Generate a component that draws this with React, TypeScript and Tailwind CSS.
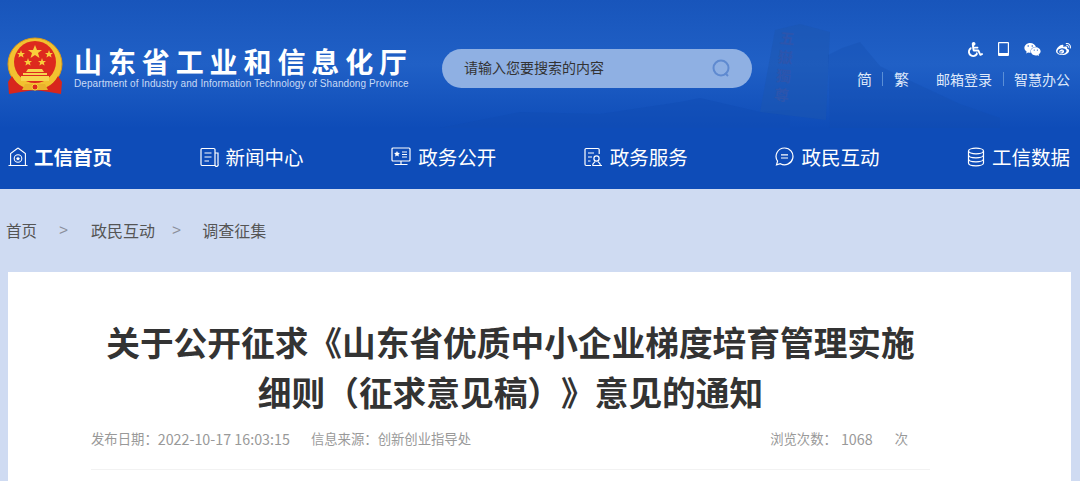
import { FaWeibo, FaWeixin, FaWheelchair } from 'react-icons/fa';

const cjk = "font-['Microsoft_YaHei','Noto_Sans_CJK_SC',sans-serif]";

const Emblem = () => (
  <svg width="64" height="60" viewBox="0 0 64 60" className="shrink-0">
    <ellipse cx="29" cy="27" rx="27" ry="26" fill="#f2c230" />
    <ellipse cx="29" cy="27" rx="27" ry="26" fill="none" stroke="#d99a1c" strokeWidth="1" />
    <circle cx="29" cy="25" r="21" fill="#dd2a1e" />
    <polygon points="29,8 31,13 36,13 32,16 33.5,21 29,18 24.5,21 26,16 22,13 27,13" fill="#f8cf3c" />
    <polygon points="15,13 16,16 19,16 16.8,17.8 17.6,20.5 15,19 12.4,20.5 13.2,17.8 11,16 14,16" fill="#f8cf3c" />
    <polygon points="43,13 44,16 47,16 44.8,17.8 45.6,20.5 43,19 40.4,20.5 41.2,17.8 39,16 42,16" fill="#f8cf3c" />
    <polygon points="22,21 23,24 26,24 23.8,25.8 24.6,28.5 22,27 19.4,28.5 20.2,25.8 18,24 21,24" fill="#f8cf3c" />
    <polygon points="36,21 37,24 40,24 37.8,25.8 38.6,28.5 36,27 33.4,28.5 34.2,25.8 32,24 35,24" fill="#f8cf3c" />
    <path d="M20 35 h18 l-2 -3 h-14z M17 36 h24 v2 h-24z M15 39 h28 v5 h-28z" fill="#f7d44e" />
    <path d="M6 39 C12 50 20 52 29 52 C38 52 46 50 52 39 L56 45 L55 57 L43 55 L29 53 L15 55 L3 57 L2 45 Z" fill="#d8261c" />
    <path d="M7 37 C13 47 20 49 29 49 C38 49 45 47 51 37" fill="none" stroke="#f2c230" strokeWidth="3" />
    <path d="M19 47 h20 l3 6 h-26z" fill="#eab22c" />
    <circle cx="29" cy="50" r="3" fill="#dd2a1e" stroke="#f8cf3c" />
  </svg>
);

const HomeIcon = () => (
  <svg width="20" height="20" viewBox="0 0 20 20" fill="none" stroke="currentColor" strokeWidth="1.1">
    <path d="M10 1 L2.6 6.5 V18.5 M10 1 L17.4 6.5 V18.5 M0.5 18.5 H19.5" />
    <circle cx="10" cy="11.5" r="3.8" />
    <path d="M10 9.4 l.7 1.4 1.5.2-1.1 1 .3 1.5-1.4-.7-1.4.7.3-1.5-1.1-1 1.5-.2z" fill="currentColor" stroke="none" />
  </svg>
);
const NewsIcon = () => (
  <svg width="19" height="20" viewBox="0 0 19 20" fill="none" stroke="currentColor" strokeWidth="1.2">
    <path d="M15 18.5 H2 A1.2 1.2 0 0 1 1 17.3 V2.7 A1.2 1.2 0 0 1 2 1.5 H13.8 A1.2 1.2 0 0 1 15 2.7 Z" />
    <path d="M15 6 H18 V17 A1.5 1.5 0 0 1 15 18.5" />
    <path d="M4.5 6 H11.5 M4.5 10 H11.5 M4.5 14 H9" />
  </svg>
);
const ScreenIcon = () => (
  <svg width="20" height="19" viewBox="0 0 20 19" fill="none" stroke="currentColor" strokeWidth="1.2">
    <rect x="1" y="1" width="18" height="13" rx="1" />
    <path d="M10 14 V17 M3.5 17.5 H16.5" />
    <path d="M6 4 l.9 1.8 2 .3-1.4 1.4.3 2-1.8-.9-1.8.9.3-2-1.4-1.4 2-.3z" fill="currentColor" stroke="none" />
    <path d="M11 5 H16 M11 7.5 H16 M11 10 H16" />
  </svg>
);
const ServiceIcon = () => (
  <svg width="19" height="20" viewBox="0 0 19 20" fill="none" stroke="currentColor" strokeWidth="1.2">
    <path d="M7 18.5 H2.2 A1.2 1.2 0 0 1 1 17.3 V2.7 A1.2 1.2 0 0 1 2.2 1.5 H14 A1.2 1.2 0 0 1 15.2 2.7 V7" />
    <path d="M4 6 H10 M4 10 H8 M4 14 H6.5" />
    <circle cx="12.5" cy="11.5" r="2.6" />
    <path d="M8.5 18.5 C9 15.8 10.5 15.5 11 14.5 M16.5 18.5 C16 15.8 14.5 15.5 14 14.5 M8.5 18.5 H18" />
  </svg>
);
const ChatIcon = () => (
  <svg width="19" height="19" viewBox="0 0 19 19" fill="none" stroke="currentColor" strokeWidth="1.2">
    <path d="M9.5 1 A8.4 8.4 0 1 1 5.4 16.7 L1.5 17.8 L2.6 14.2 A8.4 8.4 0 0 1 9.5 1 Z" />
    <path d="M6 7.8 H13 M6 11 H13" />
  </svg>
);
const DataIcon = () => (
  <svg width="18" height="20" viewBox="0 0 18 20" fill="none" stroke="currentColor" strokeWidth="1.2">
    <ellipse cx="9" cy="4" rx="7.5" ry="2.8" />
    <path d="M1.5 4 V16 C1.5 17.6 4.8 18.8 9 18.8 C13.2 18.8 16.5 17.6 16.5 16 V4" />
    <path d="M1.5 8 C1.5 9.6 4.8 10.8 9 10.8 C13.2 10.8 16.5 9.6 16.5 8 M1.5 12 C1.5 13.6 4.8 14.8 9 14.8 C13.2 14.8 16.5 13.6 16.5 12" />
  </svg>
);
const TabletIcon = () => (
  <svg width="11" height="14" viewBox="0 0 11 14" fill="currentColor">
    <path fillRule="evenodd" d="M1 0 H10 A1 1 0 0 1 11 1 V13 A1 1 0 0 1 10 14 H1 A1 1 0 0 1 0 13 V1 A1 1 0 0 1 1 0 Z M1.2 1.2 V11 H9.8 V1.2 Z" />
  </svg>
);

const navItems = [
  { label: '工信首页', icon: <HomeIcon />, active: true },
  { label: '新闻中心', icon: <NewsIcon /> },
  { label: '政务公开', icon: <ScreenIcon /> },
  { label: '政务服务', icon: <ServiceIcon /> },
  { label: '政民互动', icon: <ChatIcon /> },
  { label: '工信数据', icon: <DataIcon /> },
];

const App = () => {
  return (
    <div className={`h-[481px] w-[1080px] overflow-hidden bg-[#cfdbf2] ${cjk}`}>
      <header className="relative h-[189px] overflow-hidden bg-[#0e4cb8]">
        {/* fundo: faixa clara, montanha e monumento */}
        <div className="absolute inset-x-0 top-0 h-[128px] bg-gradient-to-b from-[#1855bb] via-[#2060c6] to-[#0e4cb8]" />
        <svg className="absolute left-0 top-0" width="1080" height="128" viewBox="0 0 1080 128">
          <path d="M440 128 L520 112 L600 114 L680 102 L700 98 L760 112 L790 110 V128 Z" fill="#0f4cb3" opacity="0.5" />
          <path d="M760 112 L775 30 L800 24 L830 32 L826 120 Z" fill="#1c56b0" opacity="0.5" />
          <path d="M830 128 L828 55 L842 48 L860 42 L880 66 L900 76 L960 104 L1000 118 V128 Z" fill="#134cab" opacity="0.3" />
        </svg>
        <div className="absolute left-[777px] top-[28px] w-[18px] rotate-[6deg] font-['Noto_Sans_CJK_TC',serif] text-[15px] leading-[19px] font-bold text-[#2c55ad]">
          五嶽獨尊
        </div>
        <div className="relative flex h-[125px] items-start">
          <div className="flex w-[420px] pl-[6px] pt-[37px]">
            <Emblem />
            <div className="ml-[4px] pt-[7px]">
              <div className="text-[28px] font-bold leading-[34px] tracking-[5.9px] whitespace-nowrap text-white">山东省工业和信息化厅</div>
              <div className="font-['Liberation_Sans',sans-serif] text-[10px] leading-[12px] tracking-[0.09px] whitespace-nowrap text-[#c9daf5]">
                Department of Industry and Information Technology of Shandong Province
              </div>
            </div>
          </div>
          <div className="ml-[22px] mt-[49px] flex h-[39px] w-[310px] items-center justify-between rounded-full bg-[#8fb0e3] pb-[2px] pl-[22px] pr-[22px]">
            <span className="text-[14px] text-[#333]">请输入您要搜索的内容</span>
            <svg width="18" height="18" viewBox="0 0 18 18" fill="none" stroke="#5f8ad0" strokeWidth="2">
              <circle cx="9" cy="9" r="7.5" />
              <path d="M13 14 L16 17" />
            </svg>
          </div>
          <div className="ml-auto flex w-[224px] flex-col items-end pr-[10px] pt-[41px] text-white">
            <div className="-mr-[1px] flex h-[16px] items-center gap-[15px]">
              <FaWheelchair size={15} />
              <TabletIcon />
              <FaWeixin size={17} />
              <FaWeibo size={15} />
            </div>
            <div className="mt-[14px] flex items-center text-[14px] leading-[16px] text-[#dfe9fa]">
              <span className="text-[15px]">简</span>
              <span className="mx-[10.5px] h-[14px] w-px bg-[#5b8fd6]" />
              <span className="text-[15px]">繁</span>
              <span className="ml-[27px]">邮箱登录</span>
              <span className="mx-[10.5px] h-[14px] w-px bg-[#5b8fd6]" />
              <span>智慧办公</span>
            </div>
          </div>
        </div>
        <nav className="relative flex h-[64px] items-center justify-between pb-[1px] pl-[8px] pr-[10px]">
          {navItems.map((item) => (
            <a key={item.label} className={`flex items-center text-white ${item.active ? 'gap-[6px]' : 'gap-[7px]'}`}>
              {item.icon}
              <span className={`text-[19.5px] leading-[28px] ${item.active ? 'font-bold' : ''}`}>{item.label}</span>
            </a>
          ))}
        </nav>
      </header>

      <div className="flex h-[83px] items-start pl-[6px] pt-[30px] text-[15.5px] leading-[22px] text-[#555]">
        <span>首页</span>
        <span className="mx-[22px] font-['Liberation_Sans',sans-serif] text-[#8b8f9a]">&gt;</span>
        <span className="ml-[1px] text-[16px]">政民互动</span>
        <span className="ml-[17px] mr-[17px] font-['Liberation_Sans',sans-serif] text-[#8b8f9a]">&gt;</span>
        <span className="ml-[4px] text-[16px]">调查征集</span>
      </div>

      <main className="ml-[8px] mr-[9px] h-[209px] bg-white pl-[83px] pr-[141px] pt-[45px]">
        <h1 className="-mx-[5px] text-center text-[33.7px] font-bold leading-[50px] text-[#333] [text-spacing-trim:space-all]">
          关于公开征求《山东省优质中小企业梯度培育管理实施
          <br />
          细则（征求意见稿）》意见的通知
        </h1>
        <div className="mt-[9px] flex h-[26px] items-center text-[13.35px] text-[#999]">
          <span>发布日期：</span>
          <span className="text-[14.3px]">2022-10-17 16:03:15</span>
          <span className="ml-[21px]">信息来源：创新创业指导处</span>
          <span className="ml-auto">浏览次数：</span>
          <span className="ml-[4px] text-[14.3px]">1068</span>
          <span className="ml-[22px] mr-[22px]">次</span>
        </div>
        <div className="mt-[17px] h-px bg-[#f2f2f2]" />
      </main>
    </div>
  );
};

export default App;
